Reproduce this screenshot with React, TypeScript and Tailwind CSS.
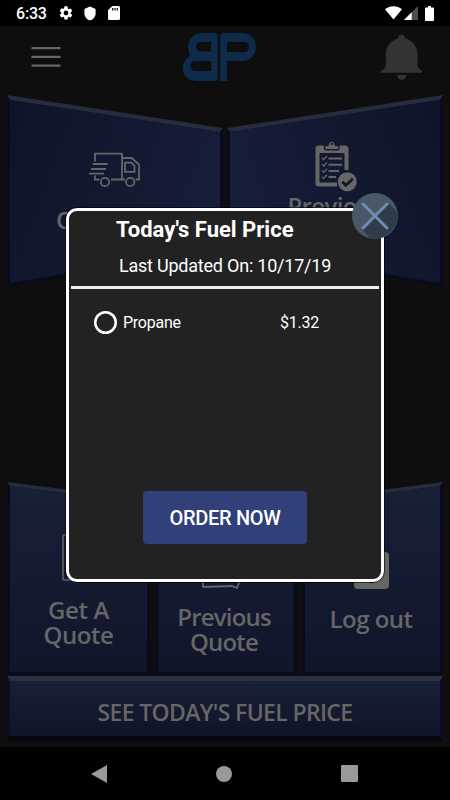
import type { ReactNode } from "react";

type TileProps = {
  outer: string;
  edge: string;
  face: string;
  children?: ReactNode;
};

// Bevelled panel: dark rim, light top edge, gradient face, all stacked in one grid cell
function Tile({ outer, edge, face, children }: TileProps) {
  return (
    <div className="grid min-w-0">
      <div className={`col-start-1 row-start-1 bg-[#080b1c] ${outer}`} />
      <div className={`col-start-1 row-start-1 bg-[#272c3d] ${edge}`} />
      <div className={`col-start-1 row-start-1 ${face}`} />
      <div className="z-10 col-start-1 row-start-1 flex flex-col items-center text-center">{children}</div>
    </div>
  );
}

function StatusBar() {
  return (
    <header className="flex h-[26px] items-center justify-between bg-black pl-4 pr-[16px] text-white">
      <div className="flex items-center">
        <span className="w-[42px] pt-[2px] text-[16px] font-medium leading-[24px] tracking-[-0.2px]">6:33</span>
        <svg className="h-[16px] w-[16px]" viewBox="0 0 24 24" fill="currentColor">
          <path d="M19.14 12.94c.04-.3.06-.61.06-.94 0-.32-.02-.64-.07-.94l2.03-1.58a.49.49 0 0 0 .12-.61l-1.92-3.32a.49.49 0 0 0-.59-.22l-2.39.96a7 7 0 0 0-1.62-.94l-.36-2.54A.48.48 0 0 0 13.92 2h-3.84a.48.48 0 0 0-.47.41l-.36 2.54c-.59.24-1.13.57-1.62.94l-2.39-.96a.48.48 0 0 0-.59.22L2.74 8.87a.48.48 0 0 0 .12.61l2.03 1.58a7.5 7.5 0 0 0 0 1.88l-2.03 1.58a.49.49 0 0 0-.12.61l1.92 3.32c.12.22.37.29.59.22l2.39-.96c.5.38 1.03.7 1.62.94l.36 2.54c.05.24.24.41.48.41h3.84c.24 0 .44-.17.47-.41l.36-2.54a7 7 0 0 0 1.62-.94l2.39.96c.22.08.47 0 .59-.22l1.92-3.32a.48.48 0 0 0-.12-.61zM12 15.6a3.6 3.6 0 1 1 0-7.2 3.6 3.6 0 0 1 0 7.2z" />
        </svg>
        <svg className="ml-[10px] h-[15px] w-[12px]" viewBox="0 0 12 15" fill="currentColor">
          <path d="M6 .5 11.6 3v4.4c0 3.2-2.3 6-5.6 7.1C2.7 13.4.4 10.6.4 7.4V3z" />
        </svg>
        <svg className="ml-[12px] h-[14px] w-[12px]" viewBox="0 0 12 14" fill="currentColor">
          <path d="M4.3 0H10.500Q12 0 12 1.500V12.500Q12 14 10.500 14H1.500Q0 14 0 12.500V4.300z" />
          <path d="M4.700 2v2.500M7 2v2.500M9.300 2v2.500" stroke="#000" strokeWidth="1.200" />
        </svg>
      </div>
      <div className="flex items-center">
        <svg className="h-[14px] w-[17px]" viewBox="0 0 17 14" fill="currentColor">
          <path d="M0 3.200C4.700-.7 12.300-.7 17 3.200L8.500 13.500z" />
        </svg>
        <svg className="ml-[2px] h-[14px] w-[14px]" viewBox="0 0 14 14" fill="currentColor">
          <path d="M14 0v14H0z" opacity=".3" />
          <path d="M7.700 6.300V14H0z" />
        </svg>
        <svg className="ml-[7px] h-[15px] w-[9px]" viewBox="0 0 9 15" fill="currentColor">
          <path d="M3 0h3v1.500h2.200q.8 0 .8.800v11.900q0 .8-.8.800H.8q-.8 0-.8-.8V2.300Q0 1.500.8 1.500H3z" />
        </svg>
      </div>
    </header>
  );
}

function TopBar() {
  return (
    <div className="flex h-[69px] items-start pl-[31px] pt-[7px]">
      <svg className="mt-[13px] h-[22px] w-[30px]" viewBox="0 0 30 22" stroke="#666" strokeWidth="2.400" strokeLinecap="round">
        <path d="M1.500 2.100h27M1.500 10.900h27M1.500 19.600h27" />
      </svg>
      <svg className="ml-[122px] h-[48px] w-[74px]" viewBox="183 33 74 48" fill="#0f2b4c" fillRule="evenodd">
        <path d="M202 33H215.300Q217.600 33 217.600 35.500V78.500Q217.600 81 215.300 81H197C182 81 179 66 187 58.500Q188.500 57 190 54.500C185 44 191 33 202 33ZM201 42C194.500 42 194.500 51.500 201 51.500H211.300V42ZM195.500 61C188.800 61 188.800 71 195.500 71H211.300V61Z" />
        <path d="M222.500 33H242C260.500 33 260.500 61 242 61H227V81H220.200V35.500Q220.200 33 222.500 33ZM227 42V52H244.500C250.500 52 250.500 42 244.500 42Z" />
      </svg>
      <svg className="ml-[124px] h-[48px] w-[41px]" viewBox="381 33 41 48" fill="#333">
        <path d="M398.200 38.500C398.200 33 405 33 405 38.500C413 40.500 417.600 47 417.600 55V66Q418 68.500 422 71V72.700H381V71Q385.400 68.500 385.700 66V55C385.700 47 390.500 40.500 398.200 38.500ZM397 75H406.500C405.500 81.500 398 81.500 397 75Z" />
      </svg>
    </div>
  );
}

function TruckIcon() {
  return (
    <svg className="mt-[56px] h-[38px] w-[54px]" viewBox="88 151 54 38" fill="none" stroke="#666" strokeWidth="1.800">
      <path d="M95 161.500V153.700h27V179.500H111M95 175.500v4h4.500M122 158h9.500l7.500 6.500v15h-3.500M122 179.500h3M125 162.700h6.200l3.300 3.200v6H125zM92.700 164h15M91 169h15M89 173.600h15" />
      <circle cx="105" cy="182" r="4.200" />
      <circle cx="130.200" cy="182" r="4.200" />
    </svg>
  );
}

function ChecklistIcon() {
  return (
    <svg className="ml-[2px] mt-[45px] h-[52px] w-[44px]" viewBox="314 140 44 52" fill="none" stroke="#666" strokeWidth="1.800">
      <path d="M337 184.500H318.500Q317.500 184.500 317.500 183.500V148.500Q317.500 147.500 318.500 147.500H345Q346.500 147.500 346.500 149V170" strokeWidth="4" />
      <path d="M317 149.500h29" strokeWidth="7" />
      <path d="M324.500 145.500H328C329 139.500 334.500 139.500 335.500 145.500H339V148Q339 149.800 337 149.800H327Q324.500 149.800 324.500 148Z" fill="#666" stroke="#141a30" strokeWidth="1.400" />
      <circle cx="331.800" cy="144" r="1.200" fill="#141a30" stroke="none" />
      <path d="M322 157.800l1.800 1.800 3.300-3.600M322 164.200l1.800 1.800 3.300-3.600M322 170.400l1.800 1.800 3.300-3.600M322 176.600l1.800 1.800 3.300-3.600" strokeWidth="1.300" />
      <path d="M328.500 158.500H342M328.500 164.700H342M328.500 170.900H339M328.500 177H336" strokeWidth="2" />
      <circle cx="347.300" cy="181.800" r="10.500" fill="#141a33" stroke="none" />
      <circle cx="347.300" cy="181.800" r="9.500" fill="#666" stroke="none" />
      <path d="M342.300 181.800l3.500 3.500 7-6.500" stroke="#12172c" strokeWidth="2.700" />
    </svg>
  );
}

function PriceDialog() {
  return (
    <section className="absolute left-[66px] top-[208px] z-20 flex h-[374px] w-[318px] flex-col rounded-[11px] border-[3px] border-white bg-[#222] text-white outline outline-1 outline-black/60">
      <h1 className="ml-[47px] mt-[5px] text-[22px] font-bold leading-[28px]">Today's Fuel Price</h1>
      <p className="ml-[50px] mt-[10px] text-[18px] leading-[24px] tracking-[-0.22px]">Last Updated On: 10/17/19</p>
      <hr className="ml-[2px] mr-[2px] mt-[8px] border-0 border-t-[3px] border-[#f4eff1]" />
      <div className="mt-[20px] flex items-center pl-[25px] text-[16px] leading-[24px] tracking-[-0.25px]">
        <span className="h-[23px] w-[23px] rounded-full shadow-[inset_0_0_0_2.5px_#fff]" />
        <span className="ml-[6px] w-[157px] pt-[2px]">Propane</span>
        <span className="pt-[2px]">$1.32</span>
      </div>
      <button className="mb-[35px] ml-[74px] mt-auto h-[53px] w-[164px] rounded-[4px] bg-[#314078] text-[20px] font-medium tracking-[-0.3px]">
        ORDER NOW
      </button>
      <button aria-label="Close" className="absolute -right-[17px] -top-[18px] h-[46px] w-[46px]">
        <svg viewBox="0 0 46 46">
          <circle cx="23" cy="23" r="23" fill="#495867" />
          <path d="M36 10 45 18.500C48 35 33 48 18 45.500L10 36 23 23Z" fill="#323c48" />
          <path d="M11 11 35 35M35 11 11 35" stroke="#6f8cb5" strokeWidth="3" strokeLinecap="round" />
        </svg>
      </button>
    </section>
  );
}

export default function App() {
  return (
    <div className="relative flex h-[800px] w-[450px] flex-col overflow-hidden bg-[#0e0e0e] font-['Roboto',sans-serif]">
      <StatusBar />
      <TopBar />

      <main className="flex flex-1 flex-col px-[7px] font-['Open_Sans',sans-serif] font-semibold text-[#666]">
        <div className="grid h-[192px] grid-cols-[216px_216px] justify-between">
          <Tile
            outer="[clip-path:polygon(0_0,100%_33px,100%_154px,0_100%)]"
            edge="[clip-path:polygon(0_0,100%_33px,213px_37px,3px_5px)]"
            face="bg-linear-[110deg,#0e1328,#181f3c] [clip-path:polygon(3px_5px,213px_37px,213px_152px,3px_188px)]"
          >
            <TruckIcon />
            <span className="mt-[15px] text-[24px] leading-[32px] tracking-[-0.5px]">Order Fuel</span>
          </Tile>
          <Tile
            outer="[clip-path:polygon(0_33px,100%_0,100%_100%,0_154px)]"
            edge="[clip-path:polygon(0_33px,100%_0,213px_5px,3px_37px)]"
            face="bg-linear-[70deg,#181f3c,#0e1328] [clip-path:polygon(3px_37px,213px_5px,213px_188px,3px_152px)]"
          >
            <ChecklistIcon />
            <span className="-mt-[2px] text-[24px] leading-[32px] tracking-[-0.6px]">Previous</span>
          </Tile>
        </div>

        <div className="mt-[195px] grid h-[193px] grid-cols-[143px_141px_141px] justify-between text-[24px] leading-[25px] tracking-[-0.4px]">
          <Tile
            outer="[clip-path:polygon(0_0,100%_18px,100%_100%,0_100%)]"
            edge="[clip-path:polygon(0_0,100%_18px,140px_22px,3px_4px)]"
            face="bg-gradient-to-b from-[#182038] to-[#10152a] [clip-path:polygon(3px_4px,140px_22px,140px_190px,3px_190px)]"
          >
            <svg className="mt-[52px] h-[48px] w-[34px]" viewBox="0 0 34 48" fill="none" stroke="#666" strokeWidth="1.500">
              <rect x="1" y="1" width="32" height="45" rx="1" />
            </svg>
            <span className="mt-[15px]">Get A<br />Quote</span>
          </Tile>
          <Tile
            outer="[clip-path:polygon(0_18px,100%_18px,100%_100%,0_100%)]"
            edge="[clip-path:polygon(0_18px,100%_18px,138px_22px,3px_22px)]"
            face="bg-gradient-to-b from-[#182038] to-[#10152a] [clip-path:polygon(3px_22px,138px_22px,138px_190px,3px_190px)]"
          >
            <svg className="ml-[-8px] mt-[65px] h-[43px] w-[42px]" viewBox="0 0 42 43" fill="none" stroke="#666" strokeWidth="1.800">
              <path d="M2 1v39l29-1 5 2 3-8V1" />
            </svg>
            <span className="mr-[4px] mt-[14px] tracking-[-0.8px]">Previous<br />Quote</span>
          </Tile>
          <Tile
            outer="[clip-path:polygon(0_18px,100%_0,100%_100%,0_100%)]"
            edge="[clip-path:polygon(0_18px,100%_0,138px_4px,3px_22px)]"
            face="bg-gradient-to-b from-[#182038] to-[#10152a] [clip-path:polygon(3px_22px,138px_4px,138px_190px,3px_190px)]"
          >
            <svg className="mr-[2px] mt-[70px] h-[37px] w-[35px]" viewBox="0 0 35 37" fill="#666">
              <rect width="35" height="37" rx="4" />
              <path d="M15 30h5l-2.500 1.500z" fill="#141a30" />
            </svg>
            <span className="mr-[3px] mt-[17px] tracking-[-0.5px]">Log out</span>
          </Tile>
        </div>

        <div className="mt-[1px] h-[65px] border-x-[3px] border-b-[5px] border-t-[5px] border-x-[#0a0e20] border-b-[#05070f] border-t-[#2a3044] bg-gradient-to-b from-[#182038] to-[#0f1428] text-center text-[23px] leading-[62px] tracking-[-0.65px]">
          SEE TODAY'S FUEL PRICE
        </div>
      </main>

      <nav className="flex h-[53px] items-center justify-between bg-black pl-[91px] pr-[92px]">
        <svg className="h-[18px] w-[16px]" viewBox="0 0 16 18" fill="#999"><path d="M16 0v18L0 9z" /></svg>
        <span className="h-[16px] w-[16px] rounded-full bg-[#999]" />
        <span className="h-[17px] w-[17px] rounded-[1px] bg-[#999]" />
      </nav>

      <PriceDialog />
    </div>
  );
}
